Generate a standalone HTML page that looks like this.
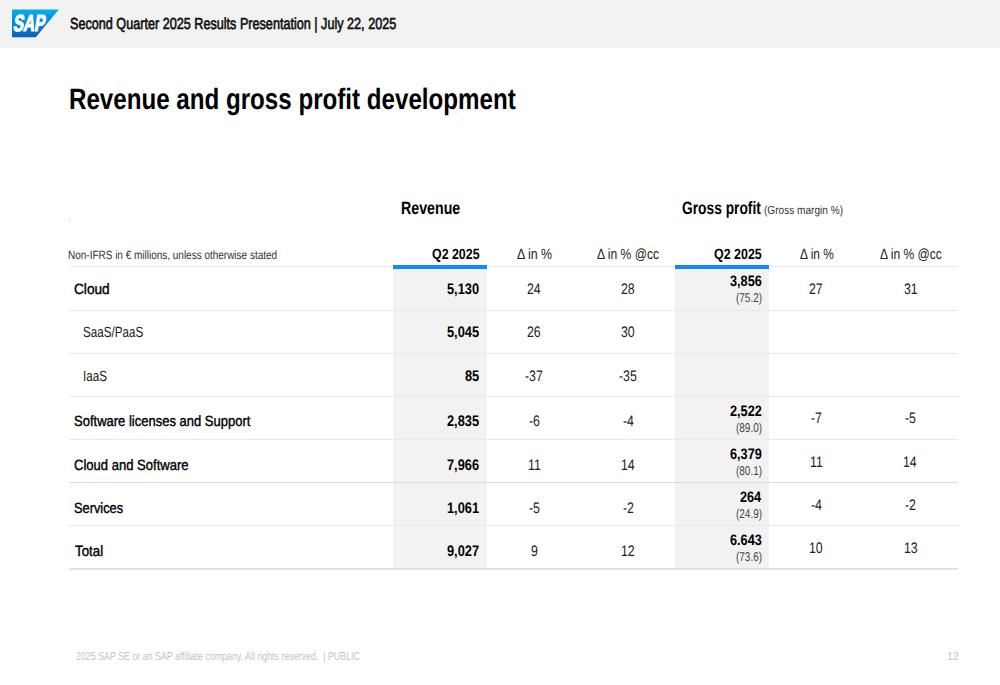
<!DOCTYPE html>
<html><head><meta charset="utf-8"><style>
html,body{margin:0;padding:0;background:#fff;width:1000px;height:685px;overflow:hidden}
body{position:relative;font-family:'Liberation Sans', sans-serif;text-rendering:geometricPrecision}
.t{position:absolute;line-height:1;white-space:nowrap;transform-origin:0 0}
</style></head><body>
<div style="position:absolute;left:0;top:0;width:1000px;height:48px;background:#f2f2f2"></div>
<svg style="position:absolute;left:0;top:0" width="70" height="48" viewBox="0 0 70 48">
<defs><linearGradient id="g" x1="0" y1="0" x2="0" y2="1"><stop offset="0" stop-color="#00aeef"/><stop offset="1" stop-color="#0b5fb9"/></linearGradient></defs>
<polygon points="12,9.5 58.8,9.5 35.8,37.3 12,37.3" fill="url(#g)"/>
<g transform="translate(12.8,31.0) skewX(-9)"><text x="0" y="0" font-family="Liberation Sans" font-weight="700" font-size="23" fill="#fff" stroke="#fff" stroke-width="1.2" textLength="31.5" lengthAdjust="spacingAndGlyphs">SAP</text></g>
</svg>
<div style="position:absolute;left:69px;top:219px;width:1px;height:1px;background:#b4a6ff"></div>
<div style="position:absolute;left:393px;top:269px;width:94px;height:300px;background:#f2f2f2"></div><div style="position:absolute;left:675px;top:269px;width:94px;height:300px;background:#f2f2f2"></div><div style="position:absolute;left:69px;top:310px;width:889px;height:1px;background:#eaeaea"></div><div style="position:absolute;left:69px;top:353px;width:889px;height:1px;background:#eaeaea"></div><div style="position:absolute;left:69px;top:396px;width:889px;height:1px;background:#eaeaea"></div><div style="position:absolute;left:69px;top:439px;width:889px;height:1px;background:#eaeaea"></div><div style="position:absolute;left:69px;top:525px;width:889px;height:1px;background:#eaeaea"></div><div style="position:absolute;left:69px;top:266px;width:889px;height:1px;background:#ececec"></div><div style="position:absolute;left:69px;top:482px;width:889px;height:1px;background:#dadada"></div><div style="position:absolute;left:69px;top:568px;width:889px;height:2px;background:#e2e2e2"></div><div style="position:absolute;left:393px;top:265px;width:94px;height:4px;background:#1188ff"></div><div style="position:absolute;left:675px;top:265px;width:94px;height:4px;background:#1188ff"></div>
<div class="t" style="left:70.20px;top:17px;font-size:15.99px;font-weight:400;color:#111;-webkit-text-stroke:0.65px #111;transform:scaleX(0.7901)">Second Quarter 2025 Results Presentation | July 22, 2025</div>
<div class="t" style="left:69.16px;top:85px;font-size:29.51px;font-weight:700;color:#000;transform:scaleX(0.8184)">Revenue and gross profit development</div>
<div class="t" style="left:400.50px;top:200px;font-size:17.88px;font-weight:700;color:#000;transform:scaleX(0.7959)">Revenue</div>
<div class="t" style="left:682.33px;top:200px;font-size:17.88px;font-weight:700;color:#000;transform:scaleX(0.7713)">Gross profit</div>
<div class="t" style="left:764.13px;top:205px;font-size:11.63px;font-weight:400;color:#333;transform:scaleX(0.8685)">(Gross margin %)</div>
<div class="t" style="left:68.27px;top:249px;font-size:12.06px;font-weight:400;color:#333;transform:scaleX(0.8283)">Non-IFRS in € millions, unless otherwise stated</div>
<div class="t" style="left:431.96px;top:248px;font-size:14.83px;font-weight:700;color:#000;transform:scaleX(0.8357)">Q2 2025</div>
<div class="t" style="left:517.00px;top:248px;font-size:14.83px;font-weight:400;color:#222;transform:scaleX(0.8341)">Δ in %</div>
<div class="t" style="left:597.00px;top:248px;font-size:14.83px;font-weight:400;color:#222;transform:scaleX(0.8158)">Δ in % @cc</div>
<div class="t" style="left:714.16px;top:248px;font-size:14.83px;font-weight:700;color:#000;transform:scaleX(0.8393)">Q2 2025</div>
<div class="t" style="left:799.80px;top:248px;font-size:14.83px;font-weight:400;color:#222;transform:scaleX(0.8049)">Δ in %</div>
<div class="t" style="left:879.80px;top:248px;font-size:14.83px;font-weight:400;color:#222;transform:scaleX(0.8132)">Δ in % @cc</div>
<div class="t" style="left:74.08px;top:283px;font-size:14.83px;font-weight:400;color:#000;-webkit-text-stroke:0.4px #000;transform:scaleX(0.9216)">Cloud</div>
<div class="t" style="left:447.08px;top:282px;font-size:15.26px;font-weight:700;color:#000;transform:scaleX(0.8400)">5,130</div>
<div class="t" style="left:527.01px;top:282px;font-size:15.26px;font-weight:400;color:#222;transform:scaleX(0.8100)">24</div>
<div class="t" style="left:621.41px;top:282px;font-size:15.26px;font-weight:400;color:#222;transform:scaleX(0.8100)">28</div>
<div class="t" style="left:730.22px;top:274px;font-size:15.12px;font-weight:700;color:#000;transform:scaleX(0.8400)">3,856</div>
<div class="t" style="left:735.76px;top:292px;font-size:12.79px;font-weight:400;color:#444;transform:scaleX(0.7800)">(75.2)</div>
<div class="t" style="left:809.32px;top:282px;font-size:15.26px;font-weight:400;color:#222;transform:scaleX(0.8100)">27</div>
<div class="t" style="left:903.51px;top:282px;font-size:15.26px;font-weight:400;color:#222;transform:scaleX(0.8100)">31</div>
<div class="t" style="left:83.01px;top:326px;font-size:14.83px;font-weight:400;color:#222;transform:scaleX(0.7853)">SaaS/PaaS</div>
<div class="t" style="left:447.08px;top:325px;font-size:15.26px;font-weight:700;color:#000;transform:scaleX(0.8400)">5,045</div>
<div class="t" style="left:527.41px;top:325px;font-size:15.26px;font-weight:400;color:#222;transform:scaleX(0.8100)">26</div>
<div class="t" style="left:621.41px;top:325px;font-size:15.26px;font-weight:400;color:#222;transform:scaleX(0.8100)">30</div>
<div class="t" style="left:83.01px;top:370px;font-size:14.83px;font-weight:400;color:#222;transform:scaleX(0.7862)">IaaS</div>
<div class="t" style="left:464.72px;top:369px;font-size:15.26px;font-weight:700;color:#000;transform:scaleX(0.8400)">85</div>
<div class="t" style="left:525.39px;top:369px;font-size:15.26px;font-weight:400;color:#222;transform:scaleX(0.8100)">-37</div>
<div class="t" style="left:619.39px;top:369px;font-size:15.26px;font-weight:400;color:#222;transform:scaleX(0.8100)">-35</div>
<div class="t" style="left:73.92px;top:415px;font-size:14.83px;font-weight:400;color:#000;-webkit-text-stroke:0.4px #000;transform:scaleX(0.8770)">Software licenses and Support</div>
<div class="t" style="left:447.08px;top:414px;font-size:15.26px;font-weight:700;color:#000;transform:scaleX(0.8400)">2,835</div>
<div class="t" style="left:528.63px;top:414px;font-size:15.26px;font-weight:400;color:#222;transform:scaleX(0.8100)">-6</div>
<div class="t" style="left:622.63px;top:414px;font-size:15.26px;font-weight:400;color:#222;transform:scaleX(0.8100)">-4</div>
<div class="t" style="left:730.22px;top:404px;font-size:15.12px;font-weight:700;color:#000;transform:scaleX(0.8400)">2,522</div>
<div class="t" style="left:735.76px;top:422px;font-size:12.79px;font-weight:400;color:#444;transform:scaleX(0.7800)">(89.0)</div>
<div class="t" style="left:810.53px;top:411px;font-size:15.26px;font-weight:400;color:#222;transform:scaleX(0.8100)">-7</div>
<div class="t" style="left:904.73px;top:411px;font-size:15.26px;font-weight:400;color:#222;transform:scaleX(0.8100)">-5</div>
<div class="t" style="left:73.92px;top:459px;font-size:14.83px;font-weight:400;color:#000;-webkit-text-stroke:0.4px #000;transform:scaleX(0.8798)">Cloud and Software</div>
<div class="t" style="left:447.08px;top:458px;font-size:15.26px;font-weight:700;color:#000;transform:scaleX(0.8400)">7,966</div>
<div class="t" style="left:527.82px;top:458px;font-size:15.26px;font-weight:400;color:#222;transform:scaleX(0.8100)">11</div>
<div class="t" style="left:621.01px;top:458px;font-size:15.26px;font-weight:400;color:#222;transform:scaleX(0.8100)">14</div>
<div class="t" style="left:730.22px;top:447px;font-size:15.12px;font-weight:700;color:#000;transform:scaleX(0.8400)">6,379</div>
<div class="t" style="left:735.76px;top:465px;font-size:12.79px;font-weight:400;color:#444;transform:scaleX(0.7800)">(80.1)</div>
<div class="t" style="left:809.72px;top:455px;font-size:15.26px;font-weight:400;color:#222;transform:scaleX(0.8100)">11</div>
<div class="t" style="left:903.11px;top:455px;font-size:15.26px;font-weight:400;color:#222;transform:scaleX(0.8100)">14</div>
<div class="t" style="left:74.04px;top:502px;font-size:14.83px;font-weight:400;color:#000;-webkit-text-stroke:0.4px #000;transform:scaleX(0.8625)">Services</div>
<div class="t" style="left:447.08px;top:501px;font-size:15.26px;font-weight:700;color:#000;transform:scaleX(0.8400)">1,061</div>
<div class="t" style="left:528.63px;top:501px;font-size:15.26px;font-weight:400;color:#222;transform:scaleX(0.8100)">-5</div>
<div class="t" style="left:622.63px;top:501px;font-size:15.26px;font-weight:400;color:#222;transform:scaleX(0.8100)">-2</div>
<div class="t" style="left:740.30px;top:490px;font-size:15.12px;font-weight:700;color:#000;transform:scaleX(0.8400)">264</div>
<div class="t" style="left:735.76px;top:508px;font-size:12.79px;font-weight:400;color:#444;transform:scaleX(0.7800)">(24.9)</div>
<div class="t" style="left:810.53px;top:498px;font-size:15.26px;font-weight:400;color:#222;transform:scaleX(0.8100)">-4</div>
<div class="t" style="left:904.73px;top:498px;font-size:15.26px;font-weight:400;color:#222;transform:scaleX(0.8100)">-2</div>
<div class="t" style="left:74.90px;top:545px;font-size:14.83px;font-weight:400;color:#000;-webkit-text-stroke:0.4px #000;transform:scaleX(0.8968)">Total</div>
<div class="t" style="left:447.08px;top:544px;font-size:15.26px;font-weight:700;color:#000;transform:scaleX(0.8400)">9,027</div>
<div class="t" style="left:530.65px;top:544px;font-size:15.26px;font-weight:400;color:#222;transform:scaleX(0.8100)">9</div>
<div class="t" style="left:621.41px;top:544px;font-size:15.26px;font-weight:400;color:#222;transform:scaleX(0.8100)">12</div>
<div class="t" style="left:730.22px;top:533px;font-size:15.12px;font-weight:700;color:#000;transform:scaleX(0.8400)">6.643</div>
<div class="t" style="left:735.76px;top:551px;font-size:12.79px;font-weight:400;color:#444;transform:scaleX(0.7800)">(73.6)</div>
<div class="t" style="left:809.32px;top:541px;font-size:15.26px;font-weight:400;color:#222;transform:scaleX(0.8100)">10</div>
<div class="t" style="left:903.51px;top:541px;font-size:15.26px;font-weight:400;color:#222;transform:scaleX(0.8100)">13</div>
<div class="t" style="left:75.94px;top:651px;font-size:11.63px;font-weight:400;color:#c4c4c4;transform:scaleX(0.7610)">2025 SAP SE or an SAP affiliate company. All rights reserved.&nbsp; | PUBLIC</div>
<div class="t" style="left:947.29px;top:651px;font-size:11.63px;font-weight:400;color:#c4c4c4;transform:scaleX(0.9091)">12</div>
</body></html>
